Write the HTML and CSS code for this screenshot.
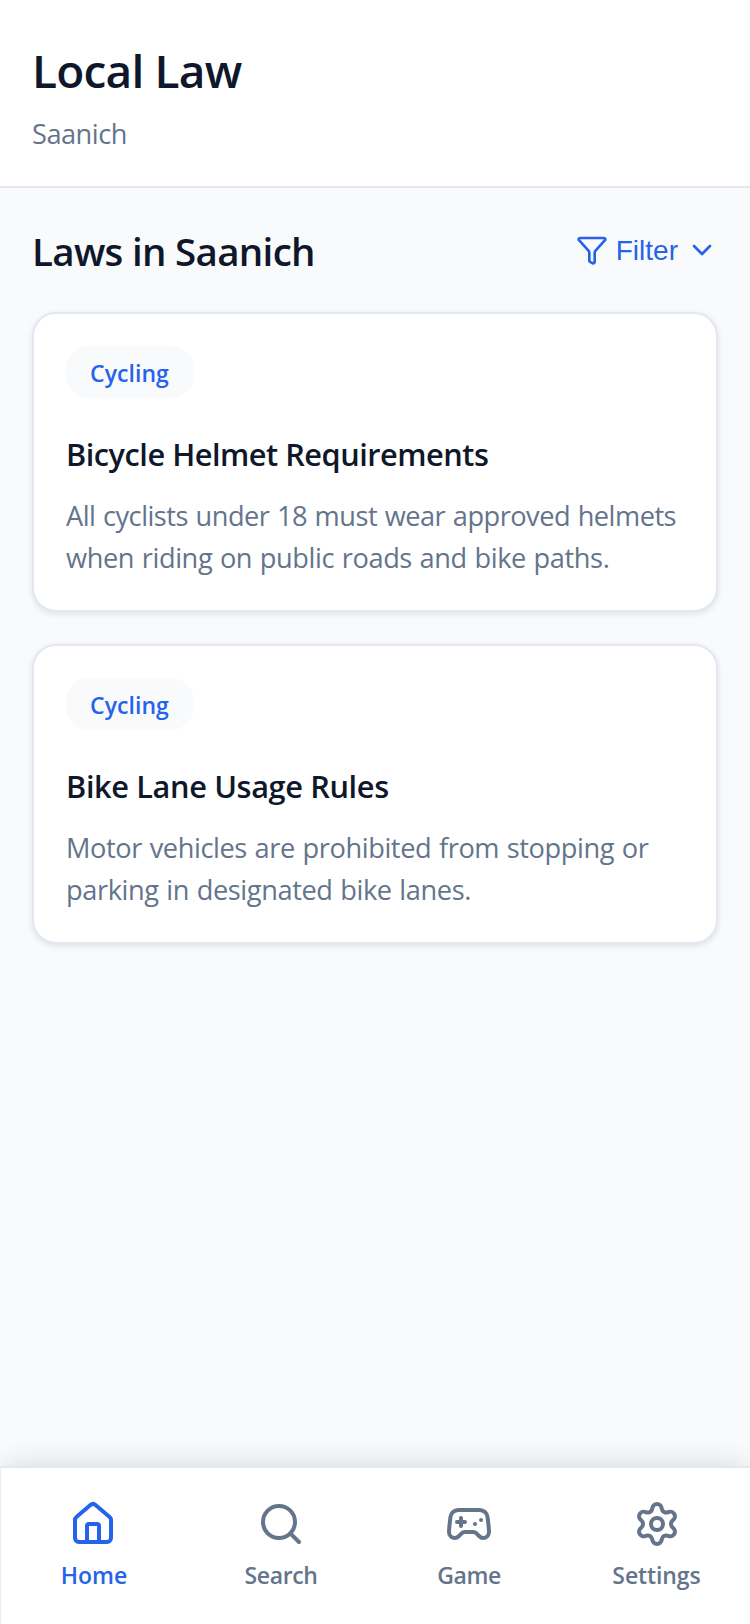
FILE: index.html
```html
<!DOCTYPE html>
<html lang="en">
<head>
<meta charset="utf-8">
<title>Local Law</title>
<link rel="stylesheet" href="styles.css">
</head>
<body>
<div class="app">
  <header class="header">
    <h1 class="app-title">Local Law</h1>
    <p class="location">Saanich</p>
  </header>

  <main class="main">
    <div class="toolbar">
      <h2 class="section-title">Laws in Saanich</h2>
      <button class="filter" type="button">
        <svg class="icon-sm" viewBox="0 0 24 24"><path d="M10 20a1 1 0 0 0 .553.895l2 1A1 1 0 0 0 14 21v-7a2 2 0 0 1 .517-1.341L21.74 4.67A1 1 0 0 0 21 3H3a1 1 0 0 0-.742 1.67l7.225 7.989A2 2 0 0 1 10 14z"/></svg>
        <span class="filter-label">Filter</span>
        <svg class="icon-sm" viewBox="0 0 24 24"><path d="m6 9 6 6 6-6"/></svg>
      </button>
    </div>

    <article class="card">
      <span class="badge">Cycling</span>
      <h3 class="card-title">Bicycle Helmet Requirements</h3>
      <p class="card-text"><span class="snug">All cyclists under 18 must wear approved helmets</span><br>when riding on public roads and bike paths.</p>
    </article>

    <article class="card">
      <span class="badge">Cycling</span>
      <h3 class="card-title card-title-short">Bike Lane Usage Rules</h3>
      <p class="card-text">Motor vehicles are prohibited from stopping or<br>parking in designated bike lanes.</p>
    </article>
  </main>

  <nav class="nav">
    <a class="nav-item active">
      <svg class="icon icon-home" viewBox="0 0 24 24"><path d="M15 21v-8a1 1 0 0 0-1-1h-4a1 1 0 0 0-1 1v8"/><path d="M3 10a2 2 0 0 1 .709-1.528l7-6a2 2 0 0 1 2.582 0l7 6A2 2 0 0 1 21 10v9a2 2 0 0 1-2 2H5a2 2 0 0 1-2-2z"/></svg>
      <span>Home</span>
    </a>
    <a class="nav-item">
      <svg class="icon" viewBox="0 0 24 24"><path d="m21 21-4.34-4.34"/><circle cx="11" cy="11" r="8"/></svg>
      <span class="label-tight">Search</span>
    </a>
    <a class="nav-item">
      <svg class="icon" viewBox="0 0 24 24"><path d="M6 11h4M8 9v4M15 12h.01M18 10h.01"/><path d="M17.32 5H6.68a4 4 0 0 0-3.978 3.59c-.006.052-.01.101-.017.152C2.604 9.416 2 14.456 2 16a3 3 0 0 0 3 3c1 0 1.5-.5 2-1l1.414-1.414A2 2 0 0 1 9.828 16h4.344a2 2 0 0 1 1.414.586L17 18c.5.5 1 1 2 1a3 3 0 0 0 3-3c0-1.545-.604-6.584-.685-7.258-.007-.05-.011-.1-.017-.151A4 4 0 0 0 17.32 5z"/></svg>
      <span class="label-tight">Game</span>
    </a>
    <a class="nav-item">
      <svg class="icon icon-settings" viewBox="0 0 24 24"><path d="M9.671 4.136a2.34 2.34 0 0 1 4.659 0 2.34 2.34 0 0 0 3.319 1.915 2.34 2.34 0 0 1 2.33 4.033 2.34 2.34 0 0 0 0 3.831 2.34 2.34 0 0 1-2.33 4.033 2.34 2.34 0 0 0-3.319 1.915 2.34 2.34 0 0 1-4.659 0 2.34 2.34 0 0 0-3.32-1.915 2.34 2.34 0 0 1-2.33-4.033 2.34 2.34 0 0 0 0-3.831A2.34 2.34 0 0 1 6.35 6.051a2.34 2.34 0 0 0 3.319-1.915"/><circle cx="12" cy="12" r="3"/></svg>
      <span class="label-wide">Settings</span>
    </a>
  </nav>
</div>
</body>
</html>
```
FILE: styles.css
```css
* { box-sizing: border-box; margin: 0; padding: 0; }

body {
  background: #f9fafc;
  color: #0f172a;
  font-family: "Segoe UI", "Open Sans", "Noto Sans", sans-serif;
}

.app {
  display: flex;
  flex-direction: column;
  height: 1624px;
  overflow: hidden;
}

.header {
  height: 188px;
  padding: 34px 32px 0;
  background: #fff;
  border-bottom: 2px solid #e2e8f0;
}

.app-title {
  font-size: 46px;
  font-weight: 600;
  line-height: 72px;
  letter-spacing: -0.8px;
}

.location {
  margin-top: 7px;
  font-size: 27.2px;
  line-height: 42px;
  letter-spacing: -0.5px;
  color: #64748b;
}

.main { flex: 1; padding: 32px; }

.toolbar {
  display: flex;
  align-items: center;
  justify-content: space-between;
  height: 60px;
  margin-bottom: 32px;
}

.section-title {
  padding-top: 2px;
  font-size: 38.5px;
  font-weight: 600;
  line-height: 58px;
  letter-spacing: -0.69px;
}

.filter {
  display: flex;
  align-items: center;
  gap: 8px;
  border: 0;
  background: none;
  color: #2563eb;
  font: 28px/32px "Liberation Sans", Arial, sans-serif;
}

.filter-label { padding-top: 2px; }

svg {
  display: block;
  fill: none;
  stroke: currentColor;
  stroke-width: 2;
  stroke-linecap: round;
  stroke-linejoin: round;
}

.icon-sm { width: 32px; height: 32px; }
.icon { width: 48px; height: 48px; }
.icon-home { margin-right: 2px; }
.icon-settings { margin-left: 1px; }

.card {
  display: flex;
  flex-direction: column;
  align-items: flex-start;
  height: 300px;
  padding: 32px;
  margin-bottom: 32px;
  background: #fff;
  border: 2px solid #e2e8f0;
  border-radius: 24px;
  box-shadow: 0 2px 6px rgba(0, 0, 0, 0.1);
}

.badge {
  width: 128px;
  height: 52px;
  padding: 9px 24px 7px;
  margin-bottom: 32px;
  border-radius: 24px;
  background: #f9fafc;
  color: #2563eb;
  font-size: 23px;
  font-weight: 600;
  line-height: 36px;
  letter-spacing: 0.05px;
}

.card-title {
  margin-bottom: 17px;
  font-size: 30.7px;
  font-weight: 600;
  line-height: 48px;
  letter-spacing: -0.47px;
}

.card-title-short { letter-spacing: -0.35px; }

.card-text {
  font-size: 27.2px;
  line-height: 42px;
  letter-spacing: -0.4px;
  word-spacing: 1px;
  color: #64748b;
  white-space: nowrap;
}

.snug { letter-spacing: -0.5px; }

.nav {
  display: grid;
  grid-template-columns: 186px 188px 188px 187px;
  height: 158px;
  padding-top: 32px;
  background: #fff;
  border-top: 2px solid #e2e8f0;
  border-left: 1px solid #eceef1;
  box-shadow: 0 -8px 24px -4px rgba(0, 0, 0, 0.11);
}

.nav-item {
  display: flex;
  flex-direction: column;
  align-items: center;
  gap: 9px;
  color: #64748b;
  font-size: 23px;
  font-weight: 600;
  line-height: 36px;
}

.label-tight { letter-spacing: -0.4px; }
.label-wide { letter-spacing: -0.1px; }
.active { color: #2563eb; }
```
